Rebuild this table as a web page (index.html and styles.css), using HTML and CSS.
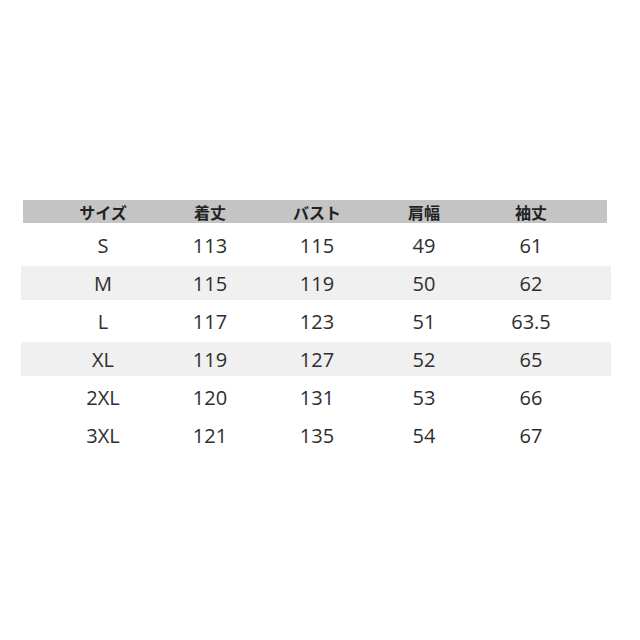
FILE: index.html
```html
<!DOCTYPE html>
<html lang="ja">
<head>
<meta charset="utf-8">
<link rel="stylesheet" href="styles.css">
</head>
<body>
<div class="page">
  <div class="table">
    <div class="row head">
      <div>サイズ</div><div>着丈</div><div>バスト</div><div>肩幅</div><div>袖丈</div>
    </div>
    <div class="body">
      <div class="row"><div>S</div><div>113</div><div>115</div><div>49</div><div>61</div></div>
      <div class="row shade"><div>M</div><div>115</div><div>119</div><div>50</div><div>62</div></div>
      <div class="row"><div>L</div><div>117</div><div>123</div><div>51</div><div>63.5</div></div>
      <div class="row shade"><div>XL</div><div>119</div><div>127</div><div>52</div><div>65</div></div>
      <div class="row"><div>2XL</div><div>120</div><div>131</div><div>53</div><div>66</div></div>
      <div class="row"><div>3XL</div><div>121</div><div>135</div><div>54</div><div>67</div></div>
    </div>
  </div>
</div>
</body>
</html>
```
FILE: styles.css
```css
html, body {
  margin: 0;
  padding: 0;
  background: #ffffff;
}
.page {
  width: 640px;
  height: 640px;
  padding-top: 200px;
  box-sizing: border-box;
}
.table {
  margin-left: 21px;
  width: 590px;
}
.row {
  display: grid;
  grid-template-columns: repeat(5, 107px);
  padding-left: 28.5px;
  height: 34px;
  align-items: center;
  justify-items: center;
  font-family: "Open Sans", "Noto Sans", sans-serif;
  font-size: 20px;
  color: #2e2e2e;
  line-height: 1;
}
.row > div {
  padding-top: 2px;
}
.head {
  height: 23px;
  margin: 0 4px 0 2px;
  padding-left: 26.5px;
  background: #c4c4c4;
  font-family: "Noto Sans CJK JP", "Noto Sans", sans-serif;
  font-weight: 700;
  font-size: 16px;
  color: #222222;
}
.head > div {
  padding-top: 0;
}
.body {
  display: flex;
  flex-direction: column;
  gap: 4px;
  margin-top: 5px;
}
.shade {
  background: #f0f0f0;
}
```
